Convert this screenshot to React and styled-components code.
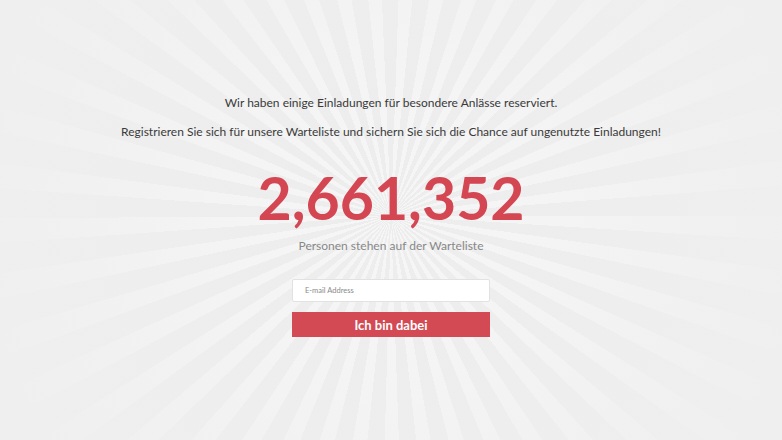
import React from "react";
import styled, { createGlobalStyle } from "styled-components";

const Global = createGlobalStyle`
  html, body { margin: 0; padding: 0; height: 100%; }
  body {
    font-family: Lato, "Open Sans", sans-serif;
    background: #efefef;
  }
  * { box-sizing: border-box; }
`;

const Page = styled.div`
  width: 782px;
  height: 440px;
  overflow: hidden;
  background:
    radial-gradient(circle at 50% 49%, rgba(239,239,239,0) 0px, rgba(239,239,239,0.25) 150px, rgba(239,239,239,0.75) 320px, #efefef 430px),
    repeating-conic-gradient(from 2deg at 50% 49%, #f6f6f6 0deg 3.6deg, #ededed 3.6deg 8deg);
  display: flex;
  flex-direction: column;
  align-items: center;
  padding-top: 94px;
`;

const Intro = styled.p`
  margin: 0;
  font-size: 12px;
  font-weight: 400;
  color: #3a3a3a;
  line-height: 17px;
  margin-bottom: ${(p) => p.$gap || 0}px;
`;

const Counter = styled.div`
  margin-top: 25px;
  font-size: 59px;
  font-weight: 700;
  color: #d44652;
  line-height: 66px;
`;

const Caption = styled.div`
  margin-top: 6px;
  font-size: 12px;
  color: #888;
  line-height: 17px;
`;

const Form = styled.form`
  margin-top: 25px;
  width: 198px;
  display: flex;
  flex-direction: column;
  gap: 10px;
`;

const Input = styled.input`
  height: 23px;
  width: 100%;
  border: 1px solid #e2e2e2;
  border-radius: 2px;
  background: #fff;
  padding: 0 12px;
  font-family: Lato, sans-serif;
  font-size: 7.5px;
  color: #333;
  outline: none;
  &::placeholder { color: #8a8a8a; }
`;

const Button = styled.button`
  height: 25px;
  width: 100%;
  border: none;
  border-radius: 0;
  background: #d34a55;
  color: #fff;
  font-family: Lato, sans-serif;
  font-weight: 700;
  font-size: 13px;
  cursor: pointer;
`;

export default function App() {
  return (
    <>
      <Global />
      <Page>
        <Intro $gap={12}>Wir haben einige Einladungen für besondere Anlässe reserviert.</Intro>
        <Intro>Registrieren Sie sich für unsere Warteliste und sichern Sie sich die Chance auf ungenutzte Einladungen!</Intro>
        <Counter>2,661,352</Counter>
        <Caption>Personen stehen auf der Warteliste</Caption>
        <Form onSubmit={(e) => e.preventDefault()}>
          <Input type="email" placeholder="E-mail Address" />
          <Button type="submit">Ich bin dabei</Button>
        </Form>
      </Page>
    </>
  );
}
